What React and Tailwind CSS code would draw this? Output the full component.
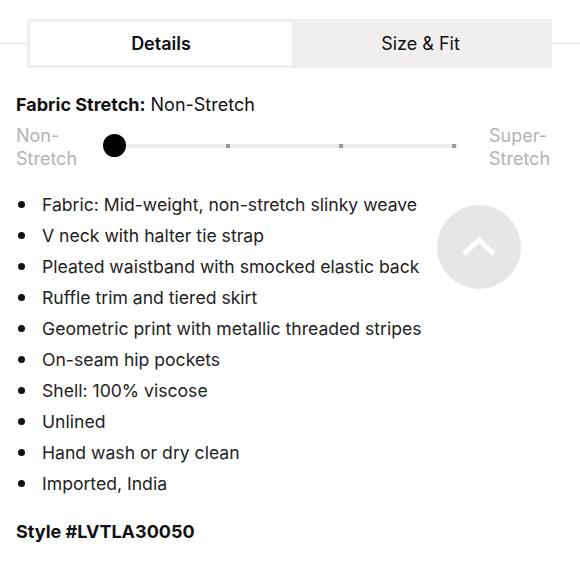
export default function App() {
  const items = [
    "Fabric: Mid-weight, non-stretch slinky weave",
    "V neck with halter tie strap",
    "Pleated waistband with smocked elastic back",
    "Ruffle trim and tiered skirt",
    "Geometric print with metallic threaded stripes",
    "On-seam hip pockets",
    "Shell: 100% viscose",
    "Unlined",
    "Hand wash or dry clean",
    "Imported, India",
  ];
  return (
    <div className="relative w-[580px] h-[580px] overflow-hidden bg-white text-[#111]" style={{ fontFamily: "Inter, 'Liberation Sans', sans-serif" }}>
      <div className="pt-[19px] flex items-center">
        <div className="w-[27px] h-px bg-[#dedede]" />
        <div className="w-[525px] h-[49px] bg-[#f0efee] p-[3px] flex">
          <div className="w-[262px] bg-white flex items-center justify-center text-[18px] font-semibold text-[#111]">Details</div>
          <div className="flex-1 flex items-center justify-center text-[18px] text-[#111]">Size &amp; Fit</div>
        </div>
        <div className="flex-1 h-px bg-[#dedede]" />
      </div>

      <div className="px-4">
        <div className="mt-[25px] text-[18px] leading-[24px]">
          <span className="font-bold">Fabric Stretch:</span> Non-Stretch
        </div>

        <div className="mt-[7px] flex items-start text-[18px] leading-[23px] text-[#b3b3b3]">
          <div className="w-[87px]">Non-<br />Stretch</div>
          <div className="relative w-[355px] h-[46px]">
            <div className="absolute left-[11px] right-0 top-[20px] h-[4px] bg-[#ededed]" />
            <div className="absolute left-[123px] top-[20px] w-[4px] h-[4px] bg-[#9a9a9a]" />
            <div className="absolute left-[236px] top-[20px] w-[4px] h-[4px] bg-[#9a9a9a]" />
            <div className="absolute left-[349px] top-[20px] w-[4px] h-[4px] bg-[#9a9a9a]" />
            <div className="absolute left-0 top-[10px] w-[23px] h-[23px] rounded-full bg-black" />
          </div>
          <div className="ml-[31px]">Super-<br />Stretch</div>
        </div>

        <ul className="mt-[19px] text-[17.6px] leading-[31px] text-[#222]">
          {items.map((t) => (
            <li key={t} className="flex items-center">
              <span className="ml-[2px] w-[7px] h-[7px] rounded-full bg-[#111]" />
              <span className="ml-[17px]">{t}</span>
            </li>
          ))}
        </ul>

        <div className="mt-[21px] text-[18px] leading-[24px] font-bold">Style #LVTLA30050</div>
      </div>

      <div className="absolute left-[437px] top-[205px] w-[84px] h-[84px] rounded-full bg-[#e6e6e6] flex items-center justify-center">
        <svg width="36" height="22" viewBox="0 0 36 22">
          <path d="M3 18 L18 4 L33 18" fill="none" stroke="white" strokeWidth="5" />
        </svg>
      </div>
    </div>
  );
}
